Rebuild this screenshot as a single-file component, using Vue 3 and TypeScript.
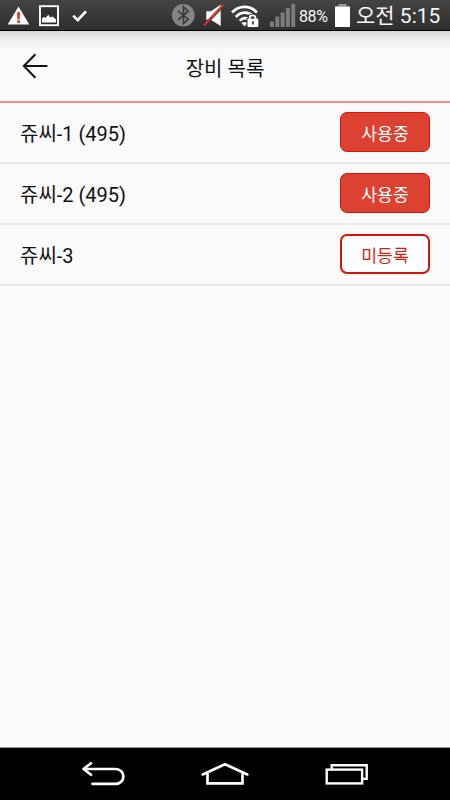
<script setup lang="ts">
import { ref } from 'vue'

interface Device {
  id: number
  name: string
  active: boolean
}

const devices = ref<Device[]>([
  { id: 1, name: '쥬씨-1 (495)', active: true },
  { id: 2, name: '쥬씨-2 (495)', active: true },
  { id: 3, name: '쥬씨-3', active: false },
])
</script>

<template>
  <div class="screen">
    <div class="status">
      <svg class="ic warning" width="24" height="30" viewBox="0 0 24 30">
        <path d="M11.5 6.5 L22.3 24.5 H0.7 Z" fill="#fff" />
        <path d="M10.2 12.5 h2.8 l-.5 6.8 h-1.8z M10.4 20.6 h2.4 v2.2 h-2.4z" fill="#e5281c" stroke="#e5281c" stroke-width=".4" />
      </svg>
      <svg class="ic image" width="22" height="30" viewBox="0 0 22 30">
        <rect x="2" y="6.2" width="18" height="19" fill="#333" stroke="#fff" stroke-width="1.9" />
        <path d="M4 22.5 V18.5 L6 17 L7.5 18 L10.3 14.8 L12.5 17.5 L14.5 16.5 L18 19.5 V22.5 Z" fill="#fff" />
      </svg>
      <svg class="ic tick" width="16" height="30" viewBox="0 0 16 30">
        <path d="M1.2 15.8 L5.8 20.2 L13.9 11.3" fill="none" stroke="#fff" stroke-width="2.6" />
      </svg>
      <svg class="ic bluetooth" width="24" height="30" viewBox="0 0 24 30">
        <circle cx="11.3" cy="15.3" r="11.3" fill="#858585" />
        <path d="M6 10.8 L16.2 19.2 L11.5 23.5 V6.8 L16.2 11.2 L6 19.8" fill="none" stroke="#393939" stroke-width="1.6" />
      </svg>
      <svg class="ic mute" width="22" height="30" viewBox="0 0 22 30">
        <path d="M3.3 11.3 H7.8 L17.7 4.8 V26 L7.8 19.8 H3.3 Z" fill="#fff" />
        <path d="M1 25.5 L20.3 5.5" stroke="#343434" stroke-width="2.8" />
        <path d="M.8 25.5 L20.3 5.2" stroke="#ee3328" stroke-width="1.8" />
      </svg>
      <svg class="ic wifi" width="30" height="30" viewBox="0 0 30 30">
        <g fill="none" stroke="#fff" stroke-width="2.7">
          <path d="M1 12.5 C8 5 19 5 26 12.5" />
          <path d="M4.8 17 C10 11.3 17 11.3 22 16" />
          <path d="M8.8 20.8 C11.3 18 14.5 17.7 17 19" />
        </g>
        <path d="M10.5 23.3 Q13.5 20.8 16.5 23.3 L13.5 26.5 Z" fill="#fff" />
        <path d="M15.5 27.8 V18 H17.1 V17 Q17.1 13.7 21.4 13.7 Q25.5 13.7 25.5 17 V18 H28 V27.8 Z" fill="#343434" />
        <rect x="16.5" y="18.7" width="10.8" height="8.3" rx=".7" fill="#fff" />
        <path d="M18.7 19.3 V17.8 Q18.7 15.4 21.6 15.4 Q24.5 15.4 24.5 17.8 V19.3" fill="none" stroke="#fff" stroke-width="1.8" />
        <path d="M21.1 21.2 h1.7 v3.4 h-1.7z" fill="#333" />
      </svg>
      <svg class="ic signal" width="26" height="30" viewBox="0 0 26 30" fill="#7c7c7c">
        <rect x="0" y="21.5" width="4" height="5.5" />
        <rect x="5.3" y="16.5" width="4" height="10.5" />
        <rect x="10.6" y="12.5" width="4" height="14.5" />
        <rect x="15.9" y="8" width="4" height="19" />
        <rect x="21.2" y="3.7" width="4" height="23.3" />
      </svg>
      <span class="percent">88%</span>
      <svg class="ic battery" width="17" height="30" viewBox="0 0 17 30">
        <rect x="4.5" y="4" width="8" height="3" fill="#999" />
        <rect x="1" y="6" width="15" height="21" fill="#fff" />
        <rect x="1" y="6" width="15" height="1" fill="#b0b0b0" />
      </svg>
      <span class="clock">오전 5:15</span>
    </div>

    <header class="header">
      <button class="back" type="button" aria-label="뒤로">
        <svg width="28" height="28" viewBox="0 0 28 28" fill="none" stroke="#111" stroke-width="2">
          <path d="M15.4 2.3 L3.8 14 L15.4 25.7 M4 14 H27.5" />
        </svg>
      </button>
      <h1 class="title">장비 목록</h1>
    </header>

    <ul class="list">
      <li v-for="device in devices" :key="device.id" class="row">
        <span class="name">{{ device.name }}</span>
        <button type="button" class="state" :class="{ active: device.active }">
          {{ device.active ? '사용중' : '미등록' }}
        </button>
      </li>
    </ul>

    <nav class="navbar">
      <svg width="44" height="24" viewBox="0 0 44 24" fill="none" stroke="#fff" stroke-width="2.7" stroke-linecap="round" stroke-linejoin="round">
        <path d="M10 1.3 L2.5 7 L10 12.7" />
        <path d="M3.5 7 H34.5 C45 7 45 21.8 34.5 21.8 H11.5" />
      </svg>
      <svg width="50" height="24" viewBox="0 0 50 24" fill="none" stroke="#fff" stroke-width="2.7" stroke-linecap="round">
        <path d="M2.7 12.4 L25 2.3 L47.3 12.4" stroke-linejoin="round" />
        <path d="M7.5 11.5 V21.4 H42.5 V11.5" />
      </svg>
      <svg width="44" height="24" viewBox="0 0 44 24" fill="none" stroke="#fff" stroke-width="2.4">
        <path d="M6.7 7 V3.3 H41.7 V16.9 H37.5" />
        <rect x="1.7" y="7.6" width="35.4" height="13.8" />
      </svg>
    </nav>
  </div>
</template>

<style>
body {
  margin: 0;
}
</style>

<style scoped>
.screen {
  width: 450px;
  height: 800px;
  display: flex;
  flex-direction: column;
  overflow: hidden;
  background: #fafafa;
  color: #111;
  font-family: Roboto, 'Noto Sans CJK KR', sans-serif;
}

.status {
  box-sizing: border-box;
  flex: none;
  height: 31px;
  display: flex;
  align-items: flex-start;
  padding-left: 7px;
  border-bottom: 1px solid #000;
  background: linear-gradient(#444, #2e2e2e);
  color: #f5f5f5;
  white-space: nowrap;
}

.ic {
  display: block;
  flex: none;
}

.image {
  margin-left: 7px;
}

.tick {
  margin-left: 12px;
}

.bluetooth {
  margin-left: 84px;
}

.mute {
  margin-left: 7px;
}

.wifi {
  margin-left: 6px;
}

.signal {
  margin-left: 9px;
}

.percent {
  width: 35px;
  margin-left: 3px;
  font-size: 16px;
  line-height: 33px;
  letter-spacing: -0.4px;
}

.clock {
  margin-left: 5px;
  font-size: 21px;
  line-height: 33px;
}

.header {
  box-sizing: border-box;
  flex: none;
  height: 72px;
  display: grid;
  grid-template-columns: 60px 1fr 60px;
  align-items: center;
  border-bottom: 2px solid #e99090;
  background: linear-gradient(#d6d6d6 0, #eee 8px, #fafafa 20px);
}

.back {
  display: block;
  width: 28px;
  height: 28px;
  margin-left: 20px;
  padding: 0;
  border: 0;
  background: none;
}

.back svg {
  display: block;
}

.title {
  margin: 0;
  padding-top: 5px;
  font-size: 20px;
  line-height: 24px;
  font-weight: 400;
  text-align: center;
}

.list {
  flex: 1;
  margin: 0;
  padding: 0;
  list-style: none;
}

.row {
  box-sizing: border-box;
  height: 61px;
  display: flex;
  align-items: center;
  justify-content: space-between;
  padding: 0 20px;
  border-bottom: 2px solid #e9e9e9;
}

.name {
  padding-top: 2px;
  font-size: 20px;
  line-height: 24px;
}

.state {
  box-sizing: border-box;
  width: 90px;
  height: 40px;
  margin-bottom: 1px;
  padding: 4px 0 0;
  border: 2px solid #d81406;
  border-radius: 7px;
  background: #fff;
  color: #d81e14;
  font-family: inherit;
  font-size: 17.3px;
  line-height: 24px;
}

.state.active {
  border-width: 1px;
  background: #dd4132;
  color: #fff;
}

.navbar {
  box-sizing: border-box;
  flex: none;
  height: 53px;
  display: flex;
  justify-content: space-between;
  padding: 14px 81px 0;
  border-top: 1px solid #999;
  background: #000;
}
</style>
